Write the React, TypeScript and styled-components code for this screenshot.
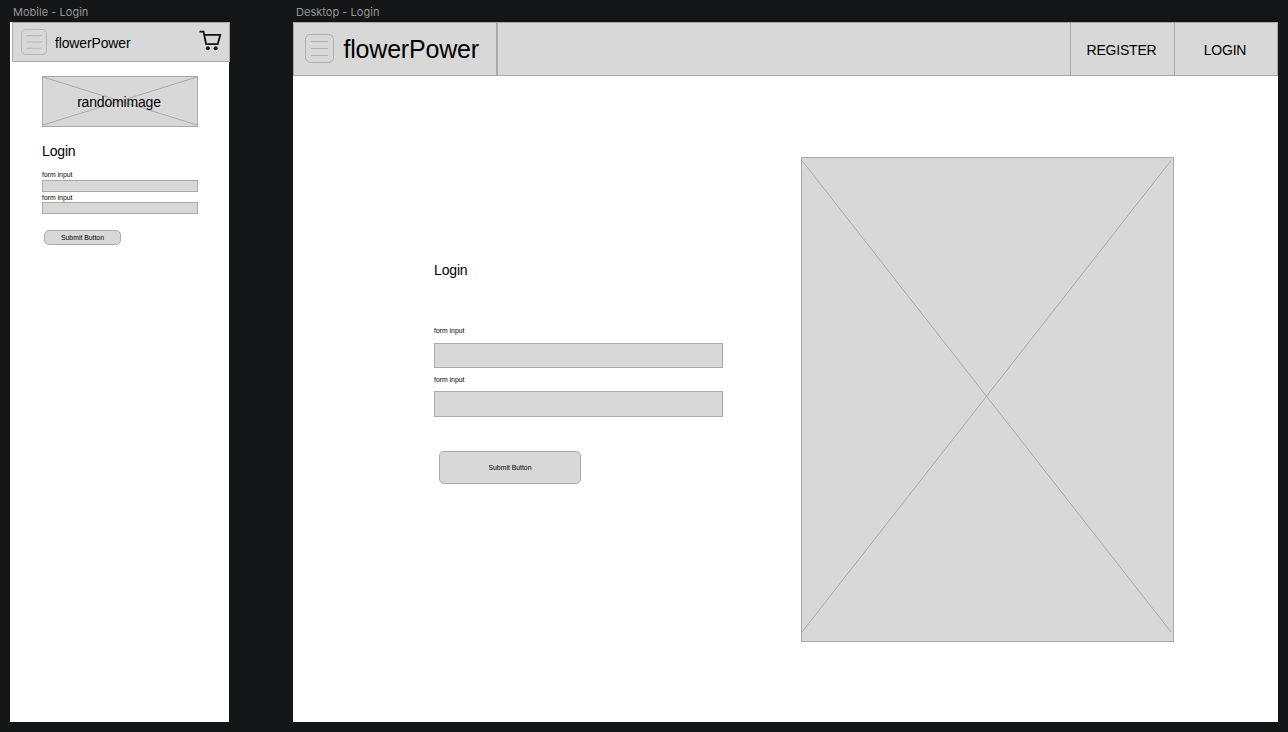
import React from "react";
import styled, { createGlobalStyle } from "styled-components";

const FILL = "#d8d8d8";
const LINE = "#a9a9a9";

const GlobalStyle = createGlobalStyle`
  * { box-sizing: border-box; }
  body {
    margin: 0;
    background: #131517;
    font-family: "Liberation Sans", Arial, Helvetica, sans-serif;
    color: #000;
  }
`;

const Canvas = styled.main`
  display: flex;
  gap: 64px;
  width: 1288px;
  height: 732px;
  padding: 0 10px;
  overflow: hidden;
`;

const Artboard = styled.section<{ $width: number }>`
  display: flex;
  flex-direction: column;
  flex: none;
  width: ${(p) => p.$width}px;
`;

const ArtboardTitle = styled.h2`
  height: 22px;
  margin: 0;
  padding-left: 3px;
  font: 400 11px/25px Inter, sans-serif;
  letter-spacing: 0.03px;
  color: #969696;
  white-space: nowrap;
`;

const Screen = styled.div`
  height: 700px;
  background: #fff;
`;

const MobileHeader = styled.header`
  display: flex;
  align-items: flex-start;
  width: 218px;
  height: 40px;
  margin-left: 2px;
  padding: 6px 7px 0 8px;
  background: ${FILL};
  border: 1px solid ${LINE};
`;

const MobileBrand = styled.span`
  flex: 1;
  margin-left: 8px;
  font-size: 14px;
  letter-spacing: -0.14px;
  line-height: 29px;
`;

const MobileBody = styled.div`
  display: flex;
  flex-direction: column;
  width: 156px;
  margin: 14px 0 0 32px;
`;

const Banner = styled.div`
  display: grid;
  width: 156px;
  height: 51px;
  > * { grid-area: 1 / 1; }
`;

const BannerText = styled.span`
  place-self: center;
  padding: 1px 2px 0 0;
  font-size: 14px;
  letter-spacing: -0.17px;
  line-height: 16px;
`;

const Heading = styled.h1<{ $top: number; $bottom: number }>`
  margin: ${(p) => p.$top}px 0 ${(p) => p.$bottom}px;
  font-size: 14px;
  letter-spacing: -0.15px;
  font-weight: 400;
  line-height: 16px;
`;

const FieldLabel = styled.label<{ $height: number }>`
  display: block;
  height: ${(p) => p.$height}px;
  font-size: 6.85px;
  line-height: 9px;
`;

const Field = styled.div<{ $height: number; $gap: number }>`
  height: ${(p) => p.$height}px;
  margin-bottom: ${(p) => p.$gap}px;
  background: ${FILL};
  border: 1px solid ${LINE};
`;

const Submit = styled.button<{ $width: number; $height: number; $left: number }>`
  width: ${(p) => p.$width}px;
  height: ${(p) => p.$height}px;
  margin-left: ${(p) => p.$left}px;
  padding: 1px 0 0;
  background: ${FILL};
  border: 1px solid ${LINE};
  border-radius: 5px;
  color: #000;
  font-family: inherit;
  font-size: 6.85px;
  line-height: 8px;
`;

const DesktopHeader = styled.header`
  display: flex;
  height: 54px;
  background: ${FILL};
  border: 1px solid ${LINE};
`;

const DesktopBrand = styled.div`
  display: flex;
  width: 204px;
  padding: 11px 0 0 11px;
  border-right: 2px solid ${LINE};
  font-size: 25px;
  letter-spacing: -0.2px;
  line-height: 30px;
`;

const BrandText = styled.span`
  margin-left: 9.5px;
`;

const Nav = styled.nav`
  display: flex;
  margin-left: auto;
`;

const NavItem = styled.a<{ $width: number }>`
  display: flex;
  align-items: center;
  justify-content: center;
  width: ${(p) => p.$width}px;
  padding: 2px 2px 0 0;
  border-left: 1px solid ${LINE};
  font-size: 14px;
  letter-spacing: -0.2px;
`;

const DesktopBody = styled.div`
  display: flex;
  padding-left: 141px;
`;

const DesktopForm = styled.form`
  width: 289px;
  padding-top: 186px;
`;

const Picture = styled.div`
  width: 373px;
  height: 485px;
  margin: 81px 0 0 78px;
`;

const Drawing = styled.svg`
  display: block;
  flex: none;
`;

function MenuIcon({ size }: { size: number }) {
  return (
    <Drawing width={size} height={size} viewBox="0 0 29 29" fill="none" stroke="#b0b0b0">
      <rect x="0.5" y="0.5" width="28" height="28" rx="5" />
      <path d="M6 7.5H23M6 14.5H23M6 21.5H23" />
    </Drawing>
  );
}

function CartIcon() {
  return (
    <Drawing width="23" height="22" viewBox="0 0 23 22" fill="none">
      <path d="M0.5 2.6H4.5L7.1 15.1H18.8L21.2 5.9H5.3" stroke="#111" strokeWidth="1.8" />
      <circle cx="8.9" cy="19.3" r="2" fill="#111" />
      <circle cx="16.7" cy="19.3" r="2" fill="#111" />
    </Drawing>
  );
}

function Placeholder({ width, height, lines }: { width: number; height: number; lines: string }) {
  return (
    <Drawing width={width} height={height} fill="none" stroke={LINE}>
      <rect x="0.5" y="0.5" width={width - 1} height={height - 1} fill={FILL} />
      <path d={lines} />
    </Drawing>
  );
}

export default function App() {
  return (
    <>
      <GlobalStyle />
      <Canvas>
        <Artboard $width={219}>
          <ArtboardTitle>Mobile - Login</ArtboardTitle>
          <Screen>
            <MobileHeader>
              <MenuIcon size={26} />
              <MobileBrand>flowerPower</MobileBrand>
              <CartIcon />
            </MobileHeader>
            <MobileBody>
              <Banner>
                <Placeholder width={156} height={51} lines="M1 1L155 49M1 49L155 1" />
                <BannerText>randomimage</BannerText>
              </Banner>
              <Heading $top={16} $bottom={11}>Login</Heading>
              <FieldLabel $height={10}>form input</FieldLabel>
              <Field $height={12} $gap={1} />
              <FieldLabel $height={9}>form input</FieldLabel>
              <Field $height={12} $gap={16} />
              <Submit type="button" $width={77} $height={15} $left={2}>Submit Button</Submit>
            </MobileBody>
          </Screen>
        </Artboard>

        <Artboard $width={985}>
          <ArtboardTitle>Desktop - Login</ArtboardTitle>
          <Screen>
            <DesktopHeader>
              <DesktopBrand>
                <MenuIcon size={29} />
                <BrandText>flowerPower</BrandText>
              </DesktopBrand>
              <Nav>
                <NavItem $width={104}>REGISTER</NavItem>
                <NavItem $width={103}>LOGIN</NavItem>
              </Nav>
            </DesktopHeader>
            <DesktopBody>
              <DesktopForm>
                <Heading $top={0} $bottom={48}>Login</Heading>
                <FieldLabel $height={17}>form input</FieldLabel>
                <Field $height={25} $gap={7} />
                <FieldLabel $height={16}>form input</FieldLabel>
                <Field $height={26} $gap={34} />
                <Submit type="button" $width={142} $height={33} $left={5}>Submit Button</Submit>
              </DesktopForm>
              <Picture>
                <Placeholder width={373} height={485} lines="M1 3.5L370 475M1 475L370 3.5" />
              </Picture>
            </DesktopBody>
          </Screen>
        </Artboard>
      </Canvas>
    </>
  );
}
